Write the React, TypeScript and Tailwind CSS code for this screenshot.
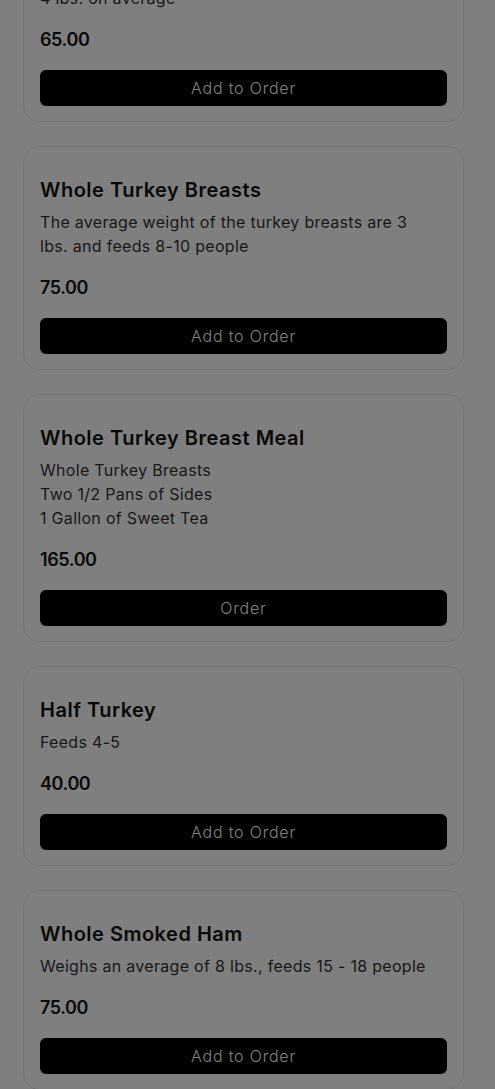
import React from "react";

interface Item {
  name: string;
  lines: string[];
  price: string;
  action: string;
}

const items: Item[] = [
  {
    name: "Whole Smoked Turkey",
    lines: ["Feeds 12 - 15 people, weighs between 12 - 1", "4 lbs. on average"],
    price: "65.00",
    action: "Add to Order",
  },
  {
    name: "Whole Turkey Breasts",
    lines: ["The average weight of the turkey breasts are 3", "lbs. and feeds 8-10 people"],
    price: "75.00",
    action: "Add to Order",
  },
  {
    name: "Whole Turkey Breast Meal",
    lines: ["Whole Turkey Breasts", "Two 1/2 Pans of Sides", "1 Gallon of Sweet Tea"],
    price: "165.00",
    action: "Order",
  },
  {
    name: "Half Turkey",
    lines: ["Feeds 4-5"],
    price: "40.00",
    action: "Add to Order",
  },
  {
    name: "Whole Smoked Ham",
    lines: ["Weighs an average of 8 lbs., feeds 15 - 18 people"],
    price: "75.00",
    action: "Add to Order",
  },
];

const MenuCard: React.FC<{ item: Item }> = ({ item }) => (
  <div className="w-[441px] rounded-2xl border border-[#e8e8e8] bg-white px-4 pt-[29px] pb-[15px]">
    <h2 className="text-[20px] leading-7 font-semibold text-[#111] tracking-[0.5px]">
      {item.name}
    </h2>
    <div className="mt-1.5 text-[16px] leading-6 text-[#333] tracking-[0.3px]">
      {item.lines.map((line, i) => (
        <p key={i}>{line}</p>
      ))}
    </div>
    <p className="mt-4 text-[18px] leading-7 font-semibold text-[#111] tracking-[-0.4px]">
      {item.price}
    </p>
    <button className="mt-4 flex h-9 w-full items-center justify-center rounded-md bg-black text-[16px] font-light tracking-[0.8px] text-white">
      {item.action}
    </button>
  </div>
);

export default function App() {
  return (
    <div
      className="relative min-h-screen overflow-hidden bg-white"
      style={{ fontFamily: "Inter, 'Liberation Sans', sans-serif" }}
    >
      <div className="mt-[-102px] flex flex-col gap-6 pl-[23px]">
        {items.map((item, i) => (
          <MenuCard key={i} item={item} />
        ))}
      </div>
      {/* modal backdrop */}
      <div className="fixed inset-0 bg-black/50" />
    </div>
  );
}
